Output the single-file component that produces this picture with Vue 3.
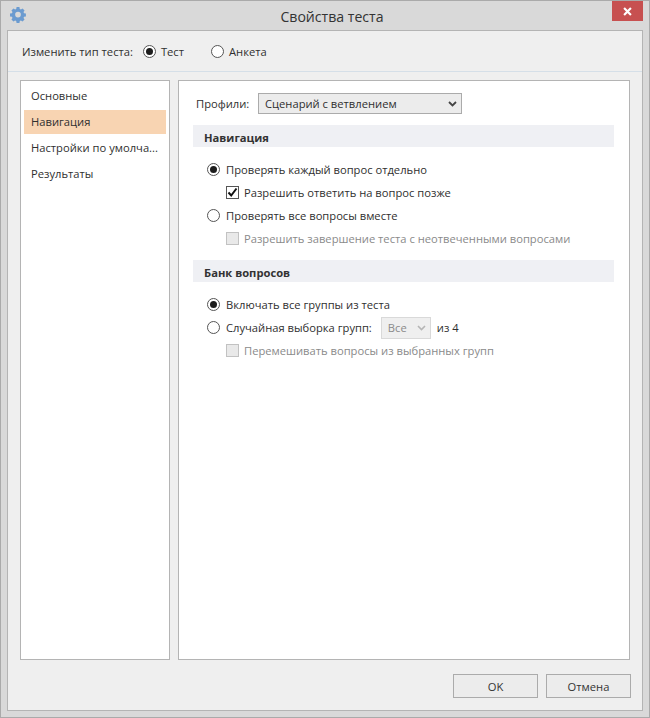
<script setup>
const tabs = ['Основные', 'Навигация', 'Настройки по умолча...', 'Результаты']
</script>

<template>
  <div class="window">
    <header class="titlebar">
      <svg class="gear" viewBox="0 0 18 18" width="16" height="16">
        <path fill="#6b9bd0" fill-rule="evenodd" d="M7.4 1h3.2l.4 2.1 1.3.6 1.8-1.2 2.3 2.3-1.2 1.8.6 1.3 2.1.4v3.2l-2.1.4-.6 1.3 1.2 1.8-2.3 2.3-1.8-1.2-1.3.6-.4 2.1H7.4L7 16.7l-1.3-.6-1.8 1.2-2.3-2.3 1.2-1.8-.6-1.3L0 11.5V8.3l2.2-.4.6-1.3-1.2-1.8 2.3-2.3 1.8 1.2L7 3.1zM9 6.2a3.2 3.2 0 1 0 0 6.4 3.2 3.2 0 0 0 0-6.4z" transform="translate(0 -.9)"/>
      </svg>
      <div class="title">Свойства теста</div>
      <div class="close">
        <svg viewBox="0 0 10 10" width="9" height="9"><path d="M1.2 1.2l7.6 7.6M8.8 1.2L1.2 8.8" stroke="#fff" stroke-width="2.4" fill="none"/></svg>
      </div>
    </header>
    <div class="client">
      <div class="typebar">
        <span class="typelabel">Изменить тип теста:</span>
        <label class="opt first"><span class="radio on"></span>Тест</label>
        <label class="opt second"><span class="radio"></span>Анкета</label>
      </div>
      <div class="panes">
        <nav class="side">
          <div v-for="(t, i) in tabs" :key="t" class="tab" :class="{ active: i === 1 }">{{ t }}</div>
        </nav>
        <main class="content">
          <div class="profile">
            <span class="profile-label">Профили:</span>
            <div class="select wide">
              <span>Сценарий с ветвлением</span>
              <svg viewBox="0 0 9 6" width="9" height="6"><path d="M1 1l3.5 3.5L8 1" stroke="#444" stroke-width="1.8" fill="none"/></svg>
            </div>
          </div>
          <h3 class="section">Навигация</h3>
          <div class="group g1">
            <div class="row"><span class="radio on"></span>Проверять каждый вопрос отдельно</div>
            <div class="row sub">
              <span class="check">
                <svg viewBox="0 0 11 11" width="11" height="11"><path d="M1.5 5.5l2.7 3L9.5 1.5" stroke="#111" stroke-width="2" fill="none"/></svg>
              </span>Разрешить ответить на вопрос позже
            </div>
            <div class="row"><span class="radio"></span>Проверять все вопросы вместе</div>
            <div class="row sub muted"><span class="check off"></span>Разрешить завершение теста с неотвеченными вопросами</div>
          </div>
          <h3 class="section s2">Банк вопросов</h3>
          <div class="group g2">
            <div class="row"><span class="radio on"></span>Включать все группы из теста</div>
            <div class="row">
              <span class="radio"></span>Случайная выборка групп:
              <div class="select small">
                <span>Все</span>
                <svg viewBox="0 0 9 6" width="9" height="6"><path d="M1 1l3.5 3.5L8 1" stroke="#b5b5b5" stroke-width="1.6" fill="none"/></svg>
              </div>
              <span class="of">из 4</span>
            </div>
            <div class="row sub muted"><span class="check off"></span>Перемешивать вопросы из выбранных групп</div>
          </div>
        </main>
      </div>
      <footer class="actions">
        <button class="btn">OK</button>
        <button class="btn">Отмена</button>
      </footer>
    </div>
  </div>
</template>

<style>
html, body { margin: 0; background: #d9d9d9; }
</style>

<style scoped>
.window {
  width: 650px;
  height: 718px;
  box-sizing: border-box;
  border: 1px solid #aaa;
  background: #d9d9d9;
  display: flex;
  flex-direction: column;
  font-family: "Open Sans", "Noto Sans", sans-serif;
  font-size: 11.2px;
  color: #2f2f2f;
}
.titlebar {
  height: 29px;
  flex: none;
  display: flex;
  align-items: center;
  justify-content: center;
  position: relative;
}
.gear { position: absolute; left: 9px; top: 6px; }
.title { font-size: 14.1px; color: #333; margin: 2px 0 0 14px; }
.close {
  position: absolute;
  right: 6px;
  top: 0;
  width: 31px;
  height: 20px;
  background: #c75050;
  display: flex;
  align-items: center;
  justify-content: center;
}
.client {
  margin: 0 6px 6px 6px;
  flex: 1;
  min-height: 0;
  border: 1px solid #b4b4b4;
  background: #efefef;
  display: flex;
  flex-direction: column;
}
.typebar {
  height: 41px;
  flex: none;
  box-sizing: border-box;
  border-bottom: 1px solid #d5dfe8;
  display: flex;
  align-items: center;
  padding-left: 14px;
}
.opt { display: flex; align-items: center; }
.first { margin-left: 10px; }
.second { margin-left: 27px; }
.typebar .radio { margin-right: 5px; }
.radio {
  width: 13px;
  height: 13px;
  box-sizing: border-box;
  border: 1px solid #555;
  border-radius: 50%;
  background: #fff;
  flex: none;
  position: relative;
  margin-right: 6px;
}
.radio.on::after {
  content: "";
  position: absolute;
  left: 2px;
  top: 2px;
  width: 7px;
  height: 7px;
  border-radius: 50%;
  background: #1c1c1c;
}
.panes {
  display: flex;
  gap: 8px;
  padding: 8px 12px 0;
  height: 588px;
  box-sizing: border-box;
  flex: none;
}
.side, .content {
  border: 1px solid #b4b4b4;
  background: #fff;
  box-sizing: border-box;
  height: 580px;
}
.side { width: 150px; padding: 3px 3px 0; flex: none; }
.tab {
  height: 24px;
  margin-bottom: 2px;
  line-height: 24px;
  padding-left: 7px;
  white-space: nowrap;
}
.tab.active { background: #f8d4b2; }
.content { width: 452px; flex: none; padding: 12px 15px 0 14px; }
.profile { display: flex; align-items: center; gap: 6px; height: 21px; margin-left: 3px; }
.profile-label { width: 56px; flex: none; }
.select {
  box-sizing: border-box;
  border: 1px solid #ababab;
  background: #ececec;
  display: flex;
  align-items: center;
  justify-content: space-between;
}
.wide { width: 204px; height: 21px; padding: 0 3px 0 6px; }
.wide svg { margin-right: 1px; }
.section {
  margin: 11px 0 0;
  height: 22px;
  box-sizing: border-box;
  padding: 2px 0 0 11px;
  line-height: 22px;
  background: #eff0f4;
  font-size: 11.2px;
  font-weight: 700;
  color: #333;
}
.s2 { margin-top: 10px; }
.group { padding-left: 14px; }
.g1 { padding-top: 11px; }
.g2 { padding-top: 11px; }
.row { display: flex; align-items: center; height: 23px; white-space: nowrap; }
.sub { padding-left: 19px; }
.muted { color: #8a8a8a; }
.check {
  width: 13px;
  height: 13px;
  box-sizing: border-box;
  border: 1px solid #555;
  background: #fff;
  flex: none;
  margin-right: 5px;
  display: flex;
  align-items: center;
  justify-content: center;
}
.check.off { border-color: #c2c2c2; background: #e9e9e9; }
.small {
  width: 50px;
  height: 22px;
  margin-left: 9px;
  padding: 0 4px 0 6px;
  border-color: #d9d9d9;
  background: #efefef;
  color: #8a8a8a;
}
.of { margin-left: 6px; }
.actions {
  flex: 1;
  display: flex;
  justify-content: flex-end;
  align-items: flex-start;
  gap: 8px;
  padding: 14px 11px 0 0;
}
.btn {
  width: 85px;
  height: 24px;
  padding: 0;
  border: 1px solid #ababab;
  background: #ececec;
  font: inherit;
  color: #333;
}
</style>
